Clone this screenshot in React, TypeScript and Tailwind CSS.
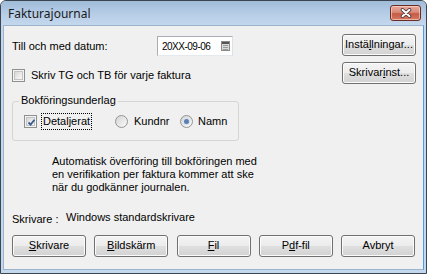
import React from "react";

function Btn({ children, w = "w-[74px]" }: { children: React.ReactNode; w?: string }) {
  return (
    <div
      className={`${w} h-[22px] rounded-[3px] border border-[#707070] bg-[linear-gradient(to_bottom,#f4f4f4_0%,#ececec_48%,#dfdfdf_52%,#d2d2d2_100%)] shadow-[inset_0_0_0_1px_#fbfbfb] flex items-center justify-center leading-none`}
    >
      <span className="pb-[1px]">{children}</span>
    </div>
  );
}

function CheckBox({ checked }: { checked?: boolean }) {
  return (
    <div className="w-[13px] h-[13px] border border-[#8e8f8f] bg-[#f4f4f4] p-[1px] shrink-0">
      <div className="w-full h-full border border-[#c3c3c3] bg-[linear-gradient(135deg,#d8d8d8,#f9f9f9)] relative">
        {checked && (
          <svg className="absolute left-[0px] top-[0px]" width="9" height="9" viewBox="0 0 9 9">
            <path d="M1.5 4.5 L3.6 6.6 L7.5 1.8" fill="none" stroke="#3a5a8c" strokeWidth="1.8" />
          </svg>
        )}
      </div>
    </div>
  );
}

function Radio({ checked }: { checked?: boolean }) {
  return (
    <div className="w-[13px] h-[13px] rounded-full border border-[#949494] bg-[linear-gradient(135deg,#d4d4d4,#fafafa)] flex items-center justify-center shrink-0">
      {checked && (
        <div className="w-[7px] h-[7px] rounded-full bg-[#d8e2ef] flex items-center justify-center">
          <div className="w-[5px] h-[5px] rounded-full bg-[#5a7fb2]" />
        </div>
      )}
    </div>
  );
}

export default function App() {
  return (
    <div className="w-[427px] h-[274px] font-['Liberation_Sans',Arial,sans-serif] text-[11px] text-black">
      <div className="w-full h-full rounded-t-[6px] border border-[#3c4450] bg-[#c3d7ed] flex flex-col overflow-hidden">
        {/* Title bar */}
        <div className="h-[24px] shrink-0 flex items-start justify-between pl-[7px] pr-[5px] bg-[linear-gradient(to_bottom,#a0bcd9,#b9cfe8_60%,#c3d7ed)]">
          <span className="font-['Noto_Sans',sans-serif] text-[12px] leading-[24px] mt-[1px] text-[#1a1a1a]">Fakturajournal</span>
          <div className="mt-[4px] w-[31px] h-[16px] rounded-[3px] border border-[#6a2d26] bg-[linear-gradient(to_bottom,#e9a99b,#d98a7a_45%,#c75a44_55%,#d37a64)] shadow-[inset_0_0_0_1px_rgba(255,220,210,0.6)] flex items-center justify-center">
            <svg width="12" height="10" viewBox="0 0 12 10">
              <path d="M2.5 1.8 L9.5 8.2 M9.5 1.8 L2.5 8.2" stroke="#4a3a3a" strokeWidth="3.6" strokeLinecap="round" />
              <path d="M2.5 1.8 L9.5 8.2 M9.5 1.8 L2.5 8.2" stroke="#ffffff" strokeWidth="2" strokeLinecap="round" />
            </svg>
          </div>
        </div>

        {/* Client area */}
        <div className="flex-1 mx-[2px] mb-[3px] border border-[#9cb3ce] border-r-[#4a9de6] bg-[#f0f0f0] flex flex-col">
          <div className="flex">
            {/* Left column */}
            <div className="flex-1 pl-[8px] pt-[10px] flex flex-col">
              <div className="h-[20px] flex items-center">
                <span className="w-[145px]">Till och med datum:</span>
                <div className="w-[76px] h-[20px] border border-[#abadb3] border-b-[#e3e9ef] border-r-[#dbdfe6] bg-white flex items-center pl-[4px] pr-[2px]">
                  <span className="flex-1 text-[10px] tracking-[-0.5px]">20XX-09-06</span>
                  <svg width="9" height="10" viewBox="0 0 9 10">
                    <rect x="0.5" y="0.5" width="8" height="9" fill="#d9d9d9" stroke="#8a8a8a" />
                    <rect x="1" y="1" width="7" height="2" fill="#555" />
                    <path d="M2 4.5 H7 M2 6.5 H7 M2 8.5 H7" stroke="#9a9a9a" strokeWidth="1" />
                  </svg>
                </div>
              </div>
              <div className="mt-[13px] h-[13px] flex items-center">
                <CheckBox />
                <span className="ml-[6px]">Skriv TG och TB för varje faktura</span>
              </div>
              <div className="relative mt-[19px] w-[227px] h-[40px] rounded-[3px] border border-[#d5d5d5]">
                <span className="absolute left-[6px] top-[-8px] px-[2px] bg-[#f0f0f0] leading-[13px]">Bokföringsunderlag</span>
                <div className="pl-[11px] pt-[11px] h-[17px] box-content flex items-center">
                  <div className="w-[91px] flex items-center">
                    <CheckBox checked />
                    <span className="ml-[4px] border border-dotted border-[#000] px-[1px] leading-[15px]">Detaljerat</span>
                  </div>
                  <div className="w-[65px] flex items-center">
                    <Radio />
                    <span className="ml-[6px]">Kundnr</span>
                  </div>
                  <div className="flex items-center">
                    <Radio checked />
                    <span className="ml-[5px]">Namn</span>
                  </div>
                </div>
              </div>
            </div>
            {/* Right column */}
            <div className="w-[74px] mr-[7px] pt-[8px] flex flex-col gap-[6px]">
              <Btn>
                Instä<span className="underline">l</span>lningar...
              </Btn>
              <Btn>
                Skrivar<span className="underline">i</span>nst...
              </Btn>
            </div>
          </div>

          <div className="ml-[48px] mt-[14px] leading-[13px]">
            <div>Automatisk överföring till bokföringen med</div>
            <div>en verifikation per faktura kommer att ske</div>
            <div>när du godkänner journalen.</div>
          </div>

          <div className="mt-[16px] ml-[8px] flex items-start h-[14px]">
            <span className="w-[54px] mt-[1px]">Skrivare :</span>
            <span className="mt-[-1px]">Windows standardskrivare</span>
          </div>

          <div className="mt-[11px] px-[8px] flex justify-between">
            <Btn>
              <span className="underline">S</span>krivare
            </Btn>
            <Btn>
              <span className="underline">B</span>ildskärm
            </Btn>
            <Btn>
              <span className="underline">F</span>il
            </Btn>
            <Btn>
              P<span className="underline">d</span>f-fil
            </Btn>
            <Btn>Avbryt</Btn>
          </div>
        </div>
      </div>
    </div>
  );
}
